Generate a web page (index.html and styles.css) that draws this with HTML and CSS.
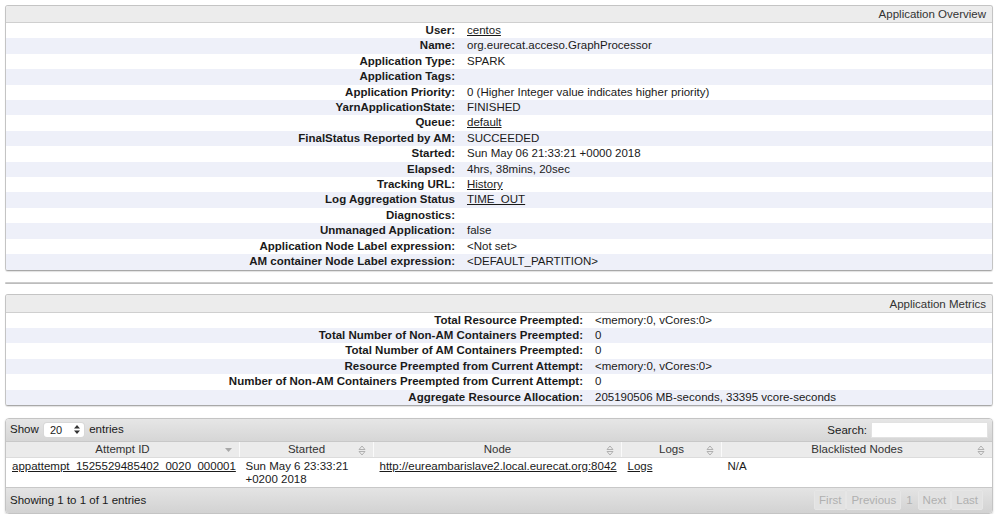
FILE: index.html
```html
<!DOCTYPE html>
<html>
<head>
<meta charset="utf-8">
<link rel="stylesheet" href="styles.css">
</head>
<body>
<div class="panel overview">
  <div class="panel-head">Application Overview</div>
  <table class="kv">
    <tr><th>User:</th><td><a href="#">centos</a></td></tr>
    <tr><th>Name:</th><td>org.eurecat.acceso.GraphProcessor</td></tr>
    <tr><th>Application Type:</th><td>SPARK</td></tr>
    <tr><th>Application Tags:</th><td></td></tr>
    <tr><th>Application Priority:</th><td>0 (Higher Integer value indicates higher priority)</td></tr>
    <tr><th>YarnApplicationState:</th><td>FINISHED</td></tr>
    <tr><th>Queue:</th><td><a href="#">default</a></td></tr>
    <tr><th>FinalStatus Reported by AM:</th><td>SUCCEEDED</td></tr>
    <tr><th>Started:</th><td>Sun May 06 21:33:21 +0000 2018</td></tr>
    <tr><th>Elapsed:</th><td>4hrs, 38mins, 20sec</td></tr>
    <tr><th>Tracking URL:</th><td><a href="#">History</a></td></tr>
    <tr><th>Log Aggregation Status</th><td><a href="#">TIME_OUT</a></td></tr>
    <tr><th>Diagnostics:</th><td></td></tr>
    <tr><th>Unmanaged Application:</th><td>false</td></tr>
    <tr><th>Application Node Label expression:</th><td>&lt;Not set&gt;</td></tr>
    <tr><th>AM container Node Label expression:</th><td>&lt;DEFAULT_PARTITION&gt;</td></tr>
  </table>
</div>
<div class="divider"></div>
<div class="panel metrics">
  <div class="panel-head">Application Metrics</div>
  <table class="kv">
    <tr><th>Total Resource Preempted:</th><td>&lt;memory:0, vCores:0&gt;</td></tr>
    <tr><th>Total Number of Non-AM Containers Preempted:</th><td>0</td></tr>
    <tr><th>Total Number of AM Containers Preempted:</th><td>0</td></tr>
    <tr><th>Resource Preempted from Current Attempt:</th><td>&lt;memory:0, vCores:0&gt;</td></tr>
    <tr><th>Number of Non-AM Containers Preempted from Current Attempt:</th><td>0</td></tr>
    <tr><th>Aggregate Resource Allocation:</th><td>205190506 MB-seconds, 33395 vcore-seconds</td></tr>
  </table>
</div>
<div class="grid">
  <div class="toolbar">
    <div class="length">Show <span class="select">20<svg width="6" height="9" viewBox="0 0 6 9"><path d="M0 3.5 L3 0 L6 3.5Z M0 5.5 L3 9 L6 5.5Z" fill="#333"/></svg></span> entries</div>
    <div class="search">Search: <span class="input"></span></div>
  </div>
  <table class="attempts">
    <thead>
      <tr>
        <th class="c1"><span>Attempt ID</span><svg class="sort" width="7" height="4" viewBox="0 0 7 4"><path d="M0 0 L7 0 L3.5 4Z" fill="#a8a8a8"/></svg></th>
        <th class="c2"><span>Started</span><svg class="sort" width="8" height="11" viewBox="0 0 8 11"><path d="M1 4.5 L4 1 L7 4.5Z M1 6.5 L4 10 L7 6.5Z" fill="none" stroke="#b0b0b0" stroke-width="1"/></svg></th>
        <th class="c3"><span>Node</span><svg class="sort" width="8" height="11" viewBox="0 0 8 11"><path d="M1 4.5 L4 1 L7 4.5Z M1 6.5 L4 10 L7 6.5Z" fill="none" stroke="#b0b0b0" stroke-width="1"/></svg></th>
        <th class="c4"><span>Logs</span><svg class="sort" width="8" height="11" viewBox="0 0 8 11"><path d="M1 4.5 L4 1 L7 4.5Z M1 6.5 L4 10 L7 6.5Z" fill="none" stroke="#b0b0b0" stroke-width="1"/></svg></th>
        <th class="c5"><span>Blacklisted Nodes</span><svg class="sort" width="8" height="11" viewBox="0 0 8 11"><path d="M1 4.5 L4 1 L7 4.5Z M1 6.5 L4 10 L7 6.5Z" fill="none" stroke="#b0b0b0" stroke-width="1"/></svg></th>
      </tr>
    </thead>
    <tbody>
      <tr>
        <td><a href="#">appattempt_1525529485402_0020_000001</a></td>
        <td>Sun May 6 23:33:21<br>+0200 2018</td>
        <td><a href="#">http://eureambarislave2.local.eurecat.org:8042</a></td>
        <td><a href="#">Logs</a></td>
        <td>N/A</td>
      </tr>
    </tbody>
  </table>
  <div class="footer">
    <div class="info">Showing 1 to 1 of 1 entries</div>
    <div class="paging">
      <span class="btn">First</span><span class="btn">Previous</span><span class="num">1</span><span class="btn">Next</span><span class="btn">Last</span>
    </div>
  </div>
</div>
</body>
</html>
```
FILE: styles.css
```css
html, body {
  margin: 0;
  padding: 0;
  background: #fff;
}
body {
  padding: 5px 6px 0 5px;
  font-family: "Liberation Sans", Arial, Helvetica, sans-serif;
  font-size: 11.5px;
  color: #1a1a1a;
}
a {
  color: #1a1a1a;
  text-decoration: underline;
}
.panel {
  border: 1px solid #c4c4c4;
  border-bottom-color: #a8a8a8;
  border-radius: 3px;
  box-shadow: 0 1px 1px rgba(0,0,0,0.12);
  overflow: hidden;
}
.panel-head {
  height: 16px;
  line-height: 17px;
  background: #ececec;
  border-bottom: 1px solid #cfcfcf;
  text-align: right;
  padding-right: 6px;
  color: #333;
}
.metrics .panel-head {
  height: 17px;
  line-height: 18px;
}
.kv {
  width: 100%;
  border-collapse: collapse;
}
.kv th, .kv td {
  padding: 0;
  height: 15.4px;
  line-height: 15.4px;
  white-space: nowrap;
}
.kv th {
  font-weight: bold;
  text-align: right;
  padding-right: 12px;
}
.overview .kv th { width: 449px; }
.metrics .kv th { width: 577px; }
.kv td {
  text-align: left;
}
.kv tr:nth-child(even) {
  background: #eef0f9;
}
.divider {
  margin: 11px 0 10px;
  height: 2px;
  background: linear-gradient(#d4d4d4, #b4b4b4);
  border-radius: 1px;
}
.grid {
  margin-top: 12px;
  border: 1px solid #c4c4c4;
  border-radius: 4px;
  box-shadow: 0 1px 2px rgba(0,0,0,0.18);
  overflow: hidden;
}
.toolbar {
  display: flex;
  justify-content: space-between;
  align-items: center;
  height: 22px;
  padding: 0 4px 0 4px;
  background: linear-gradient(#e6e6e6, #d6d6d6);
  border-bottom: 1px solid #c8c8c8;
}
.select {
  display: inline-flex;
  align-items: center;
  justify-content: space-between;
  width: 30px;
  height: 14px;
  padding: 0 4px 0 6px;
  margin: 0 2px;
  background: #fff;
  border-radius: 3px;
  font-size: 11px;
  vertical-align: middle;
  box-shadow: 0 0 0 1px #d8d8d8;
}
.search {
  display: flex;
  align-items: center;
  gap: 4px;
}
.input {
  display: inline-block;
  width: 115px;
  height: 14px;
  background: #fff;
  border: 1px solid #e2e2e2;
}
.attempts {
  width: 100%;
  border-collapse: collapse;
  table-layout: fixed;
}
.attempts th {
  position: relative;
  font-weight: normal;
  height: 15px;
  line-height: 15px;
  padding: 0;
  background: #ebebeb;
  border-left: 1px solid #fafafa;
  border-bottom: 1px solid #dcdcdc;
  color: #333;
  text-align: center;
}
.attempts th:first-child { border-left: none; }
.attempts th .sort {
  position: absolute;
  right: 7px;
  top: 3px;
}
.attempts th.c1 .sort { top: 6px; right: 7px; }
.attempts .c1 { width: 233px; }
.attempts .c2 { width: 133px; }
.attempts .c3 { width: 247px; }
.attempts .c4 { width: 99px; }
.attempts td {
  vertical-align: top;
  padding: 2px 6px 1px 6px;
  line-height: 13px;
  height: 29px;
  box-sizing: border-box;
  white-space: nowrap;
}
.footer {
  display: flex;
  justify-content: space-between;
  align-items: center;
  height: 25px;
  padding: 0 4px;
  background: linear-gradient(#e4e4e4, #d2d2d2);
  border-top: 1px solid #c8c8c8;
}
.paging {
  display: flex;
  align-items: center;
  color: #b0b0b0;
  margin-right: 5px;
}
.paging .btn, .paging .num {
  display: inline-block;
  padding: 2px 4px;
  line-height: 14px;
  background: #e2e2e2;
  border: 1px solid #e6e6e6;
  border-radius: 2px;
}
.paging .num {
  background: transparent;
  border-color: transparent;
}
```
